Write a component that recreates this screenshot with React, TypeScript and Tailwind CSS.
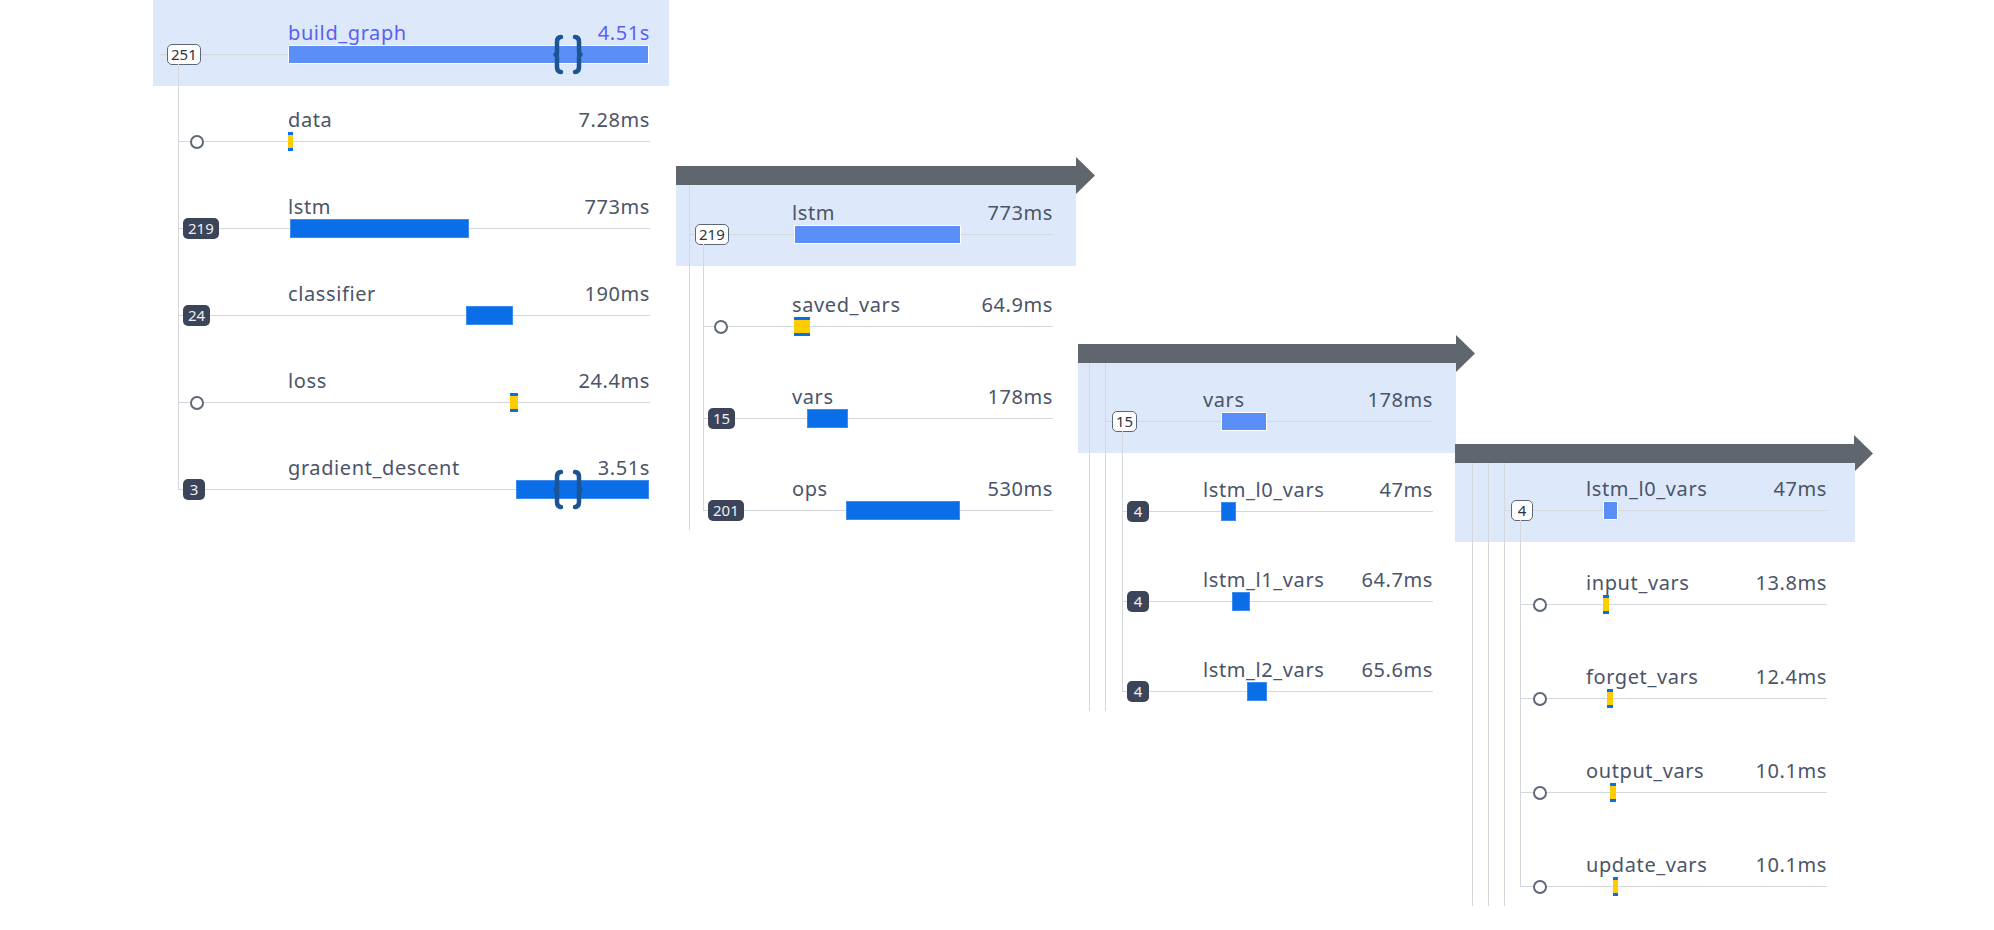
import React from "react";

type Bar = { left: number; width: number; mini?: boolean };
type Row = { name: string; time: string; badge?: string; bar: Bar; brace?: boolean };

type PanelProps = {
  pos: string;
  arrowW?: number;
  hl: string;
  guides: number;
  lead: string;
  pr: string;
  rootH: string;
  rowH: string;
  rootConn: string;
  rootSeg: string;
  kidsMl: string;
  kidConn: string;
  circleSeg: string;
  root: Row;
  rows: Row[];
  accent?: boolean;
};

function Brace() {
  // the little "{ }" markers drawn over a bar
  return (
    <svg
      className="absolute top-[-11px] left-[265px]"
      width="30"
      height="41"
      viewBox="0 0 30 41"
      fill="none"
      stroke="#1b5593"
      strokeWidth="4.5"
      strokeLinecap="round"
      strokeLinejoin="round"
    >
      <path d="M8 3 Q4 3 4 8 L4 17.5 Q4 20.5 2.5 20.5 Q4 20.5 4 23.5 L4 33 Q4 38 8 38" />
      <path d="M22 3 Q26 3 26 8 L26 17.5 Q26 20.5 27.5 20.5 Q26 20.5 26 23.5 L26 33 Q26 38 22 38" />
    </svg>
  );
}

function Badge({ label, outline }: { label: string; outline?: boolean }) {
  return (
    <div
      className={
        outline
          ? "flex h-[21px] min-w-[22px] shrink-0 items-center justify-center rounded-[5px] border-[1.5px] border-[#5e6779] bg-white px-[3px] text-[15px] leading-none text-[#2f3441]"
          : "flex h-[21px] min-w-[22px] shrink-0 items-center justify-center rounded-[5px] bg-[#3b4458] px-[5px] text-[15px] leading-none text-[#eef0f4]"
      }
    >
      {label}
    </div>
  );
}

function Circle() {
  return <div className="h-[14px] w-[14px] shrink-0 rounded-full border-2 border-[#5f6879] bg-white" />;
}

function Chart({ row, selected, accent }: { row: Row; selected?: boolean; accent?: boolean }) {
  const { bar } = row;
  return (
    <div className="flex min-w-0 flex-1 flex-col">
      <div
        className={`flex h-[24px] items-end justify-between text-[20px] leading-[24px] tracking-[0.6px] ${
          accent ? "text-[#5a60f0]" : "text-[#4b5468]"
        }`}
      >
        <span>{row.name}</span>
        <span>{row.time}</span>
      </div>
      <div className="relative h-[19px]">
        <div className="absolute inset-x-0 top-[9px] h-px bg-[#d4d7dd]" />
        {bar.mini ? (
          <div className="absolute top-0 flex h-full flex-col" style={{ left: bar.left, width: bar.width }}>
            <div className="h-[3px] bg-[#0b6ee9]" />
            <div className="flex-1 bg-[#ffcc00]" />
            <div className="h-[3px] bg-[#0b6ee9]" />
          </div>
        ) : (
          <div
            className={
              selected
                ? "absolute top-0 h-full border border-white bg-[#5a8ff7]"
                : "absolute top-0 h-full border border-[#3f8cf0] bg-[#0b6ee9]"
            }
            style={{ left: bar.left, width: bar.width }}
          />
        )}
        {row.brace && <Brace />}
      </div>
    </div>
  );
}

function Panel(p: PanelProps) {
  return (
    <div className={`absolute flex flex-col ${p.pos}`}>
      {p.arrowW && (
        <svg className="-mb-[9px] block shrink-0" width={p.arrowW + 20} height="37">
          <polygon
            points={`0,9 ${p.arrowW},9 ${p.arrowW},0 ${p.arrowW + 19},18.5 ${p.arrowW},37 ${p.arrowW},28 0,28`}
            fill="#5f666d"
          />
        </svg>
      )}
      <div className={`flex ${p.hl} ${p.lead} ${p.pr}`}>
        {Array.from({ length: p.guides }).map((_, i) => (
          <div
            key={i}
            className={`mb-[12px] w-px shrink-0 bg-[#d4d7dd] ${i < p.guides - 1 ? "mr-[15px]" : ""}`}
          />
        ))}
        <div className="flex min-w-0 flex-1 flex-col">
          <div className={`flex items-end pb-[22px] ${p.rootH}`}>
            <div className={`flex h-[19px] shrink-0 items-center ${p.rootConn}`}>
              <div className={`h-px bg-[#d4d7dd] ${p.rootSeg}`} />
              <Badge label={p.root.badge ?? ""} outline />
              <div className="h-px flex-1 bg-[#d4d7dd]" />
            </div>
            <Chart row={p.root} selected accent={p.accent} />
          </div>
          <div className={`-mt-[22px] flex ${p.kidsMl}`}>
            <div className="mb-[31px] w-px shrink-0 bg-[#d4d7dd]" />
            <div className="flex min-w-0 flex-1 flex-col pt-[22px]">
              {p.rows.map((r) => (
                <div key={r.name} className={`flex items-end pb-[22px] ${p.rowH}`}>
                  <div className={`flex h-[19px] shrink-0 items-center ${p.kidConn}`}>
                    <div className={`h-px bg-[#d4d7dd] ${r.badge ? "w-[4px]" : p.circleSeg}`} />
                    {r.badge ? <Badge label={r.badge} /> : <Circle />}
                    <div className="h-px flex-1 bg-[#d4d7dd]" />
                  </div>
                  <Chart row={r} />
                </div>
              ))}
            </div>
          </div>
        </div>
      </div>
    </div>
  );
}

export default function App() {
  return (
    <div className="relative h-[930px] w-[1994px] overflow-hidden bg-white font-['Noto_Sans',sans-serif]">
      <Panel
        pos="left-[153px] top-0 w-[516px]"
        hl="bg-[linear-gradient(to_bottom,#dde9fa_86px,transparent_86px)]"
        guides={0}
        lead="pl-[7px]"
        pr="pr-[19px]"
        rootH="h-[86px]"
        rowH="h-[87px]"
        rootConn="w-[128px]"
        rootSeg="w-[7px]"
        kidsMl="ml-[18px]"
        kidConn="w-[109px]"
        circleSeg="w-[11px]"
        accent
        root={{ name: "build_graph", time: "4.51s", badge: "251", bar: { left: 0, width: 361 }, brace: true }}
        rows={[
          { name: "data", time: "7.28ms", bar: { left: 0, width: 5, mini: true } },
          { name: "lstm", time: "773ms", badge: "219", bar: { left: 2, width: 179 } },
          { name: "classifier", time: "190ms", badge: "24", bar: { left: 178, width: 47 } },
          { name: "loss", time: "24.4ms", bar: { left: 222, width: 8, mini: true } },
          { name: "gradient_descent", time: "3.51s", badge: "3", bar: { left: 228, width: 133 }, brace: true },
        ]}
      />
      <Panel
        pos="left-[676px] top-[157px] w-[400px]"
        arrowW={400}
        hl="bg-[linear-gradient(to_bottom,#dde9fa_81px,transparent_81px)]"
        guides={1}
        lead="pl-[13px]"
        pr="pr-[23px]"
        rootH="h-[81px]"
        rowH="h-[92px]"
        rootConn="w-[102px]"
        rootSeg="w-[5px]"
        kidsMl="ml-[13px]"
        kidConn="w-[88px]"
        circleSeg="w-[10px]"
        root={{ name: "lstm", time: "773ms", badge: "219", bar: { left: 2, width: 167 } }}
        rows={[
          { name: "saved_vars", time: "64.9ms", bar: { left: 2, width: 16, mini: true } },
          { name: "vars", time: "178ms", badge: "15", bar: { left: 15, width: 41 } },
          { name: "ops", time: "530ms", badge: "201", bar: { left: 54, width: 114 } },
        ]}
      />
      <Panel
        pos="left-[1078px] top-[335px] w-[378px]"
        arrowW={378}
        hl="bg-[linear-gradient(to_bottom,#dde9fa_90px,transparent_90px)]"
        guides={2}
        lead="pl-[11px]"
        pr="pr-[23px]"
        rootH="h-[90px]"
        rowH="h-[90px]"
        rootConn="w-[97px]"
        rootSeg="w-[6px]"
        kidsMl="ml-[16px]"
        kidConn="w-[80px]"
        circleSeg="w-[11px]"
        root={{ name: "vars", time: "178ms", badge: "15", bar: { left: 18, width: 46 } }}
        rows={[
          { name: "lstm_l0_vars", time: "47ms", badge: "4", bar: { left: 18, width: 15 } },
          { name: "lstm_l1_vars", time: "64.7ms", badge: "4", bar: { left: 29, width: 18 } },
          { name: "lstm_l2_vars", time: "65.6ms", badge: "4", bar: { left: 44, width: 20 } },
        ]}
      />
      <Panel
        pos="left-[1455px] top-[435px] w-[400px]"
        arrowW={399}
        hl="bg-[linear-gradient(to_bottom,#dde9fa_79px,transparent_79px)]"
        guides={3}
        lead="pl-[17px]"
        pr="pr-[28px]"
        rootH="h-[79px]"
        rowH="h-[94px]"
        rootConn="w-[81px]"
        rootSeg="w-[6px]"
        kidsMl="ml-[15px]"
        kidConn="w-[65px]"
        circleSeg="w-[12px]"
        root={{ name: "lstm_l0_vars", time: "47ms", badge: "4", bar: { left: 17, width: 15 } }}
        rows={[
          { name: "input_vars", time: "13.8ms", bar: { left: 17, width: 6, mini: true } },
          { name: "forget_vars", time: "12.4ms", bar: { left: 21, width: 6, mini: true } },
          { name: "output_vars", time: "10.1ms", bar: { left: 24, width: 6, mini: true } },
          { name: "update_vars", time: "10.1ms", bar: { left: 27, width: 5, mini: true } },
        ]}
      />
    </div>
  );
}
